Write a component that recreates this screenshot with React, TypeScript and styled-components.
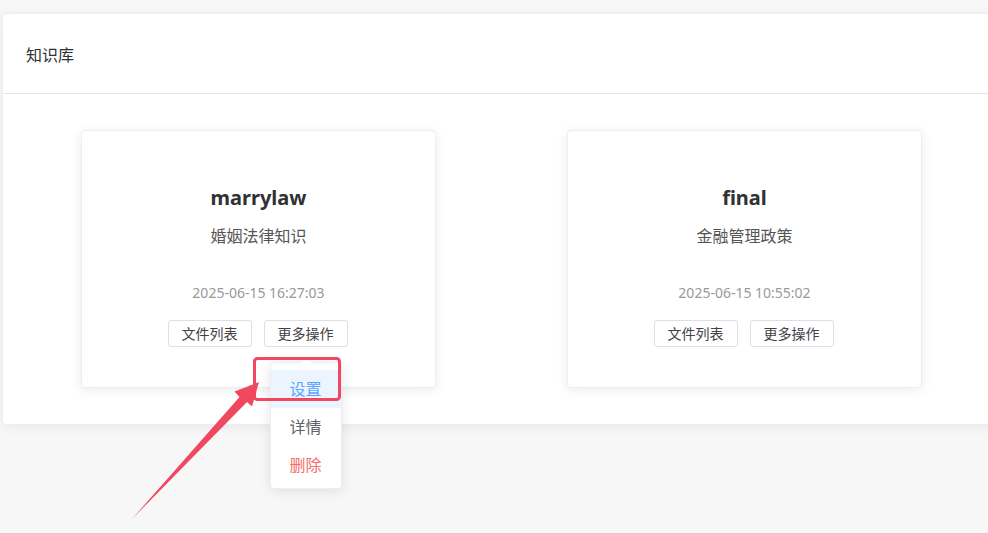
import React from "react";
import styled, { createGlobalStyle } from "styled-components";

const Global = createGlobalStyle`
  html, body { margin: 0; padding: 0; }
  body {
    background: #f7f7f8;
    font-family: "Noto Sans", "Noto Sans CJK SC", sans-serif;
    overflow: hidden;
    width: 988px;
    height: 533px;
  }
`;

const Page = styled.div`
  position: relative;
  width: 988px;
  height: 533px;
  padding: 13px 0 0 2px;
  box-sizing: border-box;
`;

const Panel = styled.section`
  width: 1010px;
  background: #fff;
  border: 1px solid #ebeef5;
  border-radius: 4px;
  box-shadow: 0 2px 12px rgba(0, 0, 0, 0.06);
  box-sizing: border-box;
`;

const Header = styled.header`
  height: 80px;
  display: flex;
  align-items: center;
  padding-left: 23px;
  border-bottom: 1px solid #e4e7ed;
  font-size: 16px;
  color: #303133;
  box-sizing: border-box;
`;

const Body = styled.div`
  display: flex;
  gap: 131px;
  padding: 36px 0 36px 78px;
`;

const Card = styled.article`
  width: 355px;
  height: 258px;
  box-sizing: border-box;
  background: #fff;
  border: 1px solid #ebeef5;
  border-radius: 4px;
  box-shadow: 0 2px 12px rgba(0, 0, 0, 0.08);
  display: flex;
  flex-direction: column;
  align-items: center;
  padding-top: 53px;
`;

const Title = styled.h3`
  margin: 0;
  font-size: 20px;
  line-height: 28px;
  font-weight: 700;
  color: #303133;
`;

const Desc = styled.p`
  margin: 12px 0 0;
  font-size: 16px;
  line-height: 24px;
  color: #555;
`;

const Time = styled.div`
  margin-top: 35px;
  font-size: 14px;
  line-height: 20px;
  color: #999;
`;

const Actions = styled.div`
  margin-top: 17px;
  display: flex;
  gap: 12px;
  margin-right: 2px;
`;

const BtnWrap = styled.div`
  position: relative;
`;

const Btn = styled.button`
  height: 27px;
  padding: 0 13px;
  border: 1px solid #dcdfe6;
  border-radius: 3px;
  background: #fff;
  font-family: inherit;
  font-size: 14px;
  color: #3f4146;
  cursor: pointer;
  line-height: 25px;
`;

const Menu = styled.ul`
  position: absolute;
  top: calc(100% + 15px);
  left: 50%;
  transform: translateX(-50%);
  margin: 0;
  padding: 7px 0 4px;
  width: 72px;
  box-sizing: border-box;
  list-style: none;
  background: #fff;
  border: 1px solid #ebeef5;
  border-radius: 4px;
  box-shadow: 0 2px 12px rgba(0, 0, 0, 0.1);
  z-index: 5;

  &::before {
    content: "";
    position: absolute;
    top: -6px;
    left: 50%;
    margin-left: -6px;
    border-width: 0 6px 6px;
    border-style: solid;
    border-color: transparent transparent #ebeef5;
  }
  &::after {
    content: "";
    position: absolute;
    top: -5px;
    left: 50%;
    margin-left: -5px;
    border-width: 0 5px 5px;
    border-style: solid;
    border-color: transparent transparent #fff;
  }
`;

const Item = styled.li<{ $tone?: "active" | "danger" }>`
  line-height: 38px;
  font-size: 16px;
  text-align: center;
  white-space: nowrap;
  color: ${(p) =>
    p.$tone === "active" ? "#5aa4ff" : p.$tone === "danger" ? "#f56c6c" : "#606266"};
  background: ${(p) => (p.$tone === "active" ? "#ecf5ff" : "transparent")};
`;

const Overlay = styled.svg`
  position: absolute;
  left: 0;
  top: 0;
  pointer-events: none;
  z-index: 10;
`;

type KB = { name: string; desc: string; time: string; open?: boolean };

const data: KB[] = [
  { name: "marrylaw", desc: "婚姻法律知识", time: "2025-06-15 16:27:03", open: true },
  { name: "final", desc: "金融管理政策", time: "2025-06-15 10:55:02" },
];

export default function App() {
  return (
    <>
      <Global />
      <Page>
        <Panel>
          <Header>知识库</Header>
          <Body>
            {data.map((kb) => (
              <Card key={kb.name}>
                <Title>{kb.name}</Title>
                <Desc>{kb.desc}</Desc>
                <Time>{kb.time}</Time>
                <Actions>
                  <Btn>文件列表</Btn>
                  <BtnWrap>
                    <Btn>更多操作</Btn>
                    {kb.open && (
                      <Menu>
                        <Item $tone="active">设置</Item>
                        <Item>详情</Item>
                        <Item $tone="danger">删除</Item>
                      </Menu>
                    )}
                  </BtnWrap>
                </Actions>
              </Card>
            ))}
          </Body>
        </Panel>
        <Overlay width="988" height="533" viewBox="0 0 988 533">
          <rect x="254.5" y="358.5" width="85" height="41" rx="3" fill="none" stroke="#f0485e" strokeWidth="3" />
          <polygon
            points="132,519 239.5,397 234.5,391.5 259,382 252,406.5 247,402 132,519"
            fill="#f0485e"
          />
        </Overlay>
      </Page>
    </>
  );
}
